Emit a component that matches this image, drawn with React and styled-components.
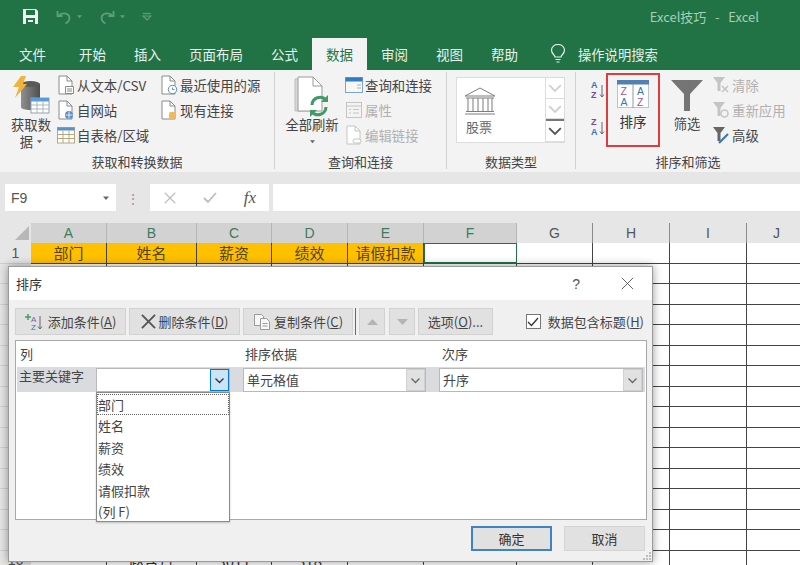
import React from 'react'
import styled, { createGlobalStyle } from 'styled-components'

const GlobalStyle = createGlobalStyle`
    html, body {
        margin: 0;
        padding: 0;
        background: #e6e6e6;
    }
    * {
        box-sizing: border-box;
    }
`

const FONT = `"Noto Sans CJK SC", "Liberation Sans", sans-serif`

const TABS = ['开始', '插入', '页面布局', '公式', '数据', '审阅', '视图', '帮助']
const COLS = [
    { name: 'A', width: 76, text: '部门', extra: '' },
    { name: 'B', width: 90, text: '姓名', extra: '赵含丹' },
    { name: 'C', width: 75, text: '薪资', extra: '3011' },
    { name: 'D', width: 76, text: '绩效', extra: '318' },
    { name: 'E', width: 76, text: '请假扣款', extra: '' },
    { name: 'F', width: 93, text: '', extra: '' },
    { name: 'G', width: 76, text: '', extra: '' },
    { name: 'H', width: 77, text: '', extra: '' },
    { name: 'I', width: 77, text: '', extra: '' },
    { name: 'J', width: 60, text: '', extra: '' },
]
const SORT_FIELDS = ['部门', '姓名', '薪资', '绩效', '请假扣款', '(列 F)']
const ROW_NUMBERS = Array.from({ length: 16 }, (_, i) => i + 1)

function SaveIcon() {
    return (
        <svg width="17" height="17" viewBox="0 0 17 17">
            <path d="M1 1h13l2 2v13H1z" fill="#f2f2f2" />
            <rect x="4" y="2" width="9" height="5" fill="#217346" />
            <rect x="4" y="10" width="9" height="6" fill="#217346" />
            <rect x="6" y="12" width="5" height="2" fill="#f2f2f2" />
        </svg>
    )
}

function UndoIcon({ flip }) {
    return (
        <svg width="16" height="16" viewBox="0 0 16 16" fill="none" stroke="#5f9d7d" strokeWidth="1.8" style={{ transform: flip ? 'scaleX(-1)' : 'none' }}>
            <path d="M1.5 2v5h5" />
            <path d="M2 7c3-3.5 9-3.5 11 0 1.2 2.5 0 6-3.5 7.5" />
        </svg>
    )
}

function TinyCaret({ color = '#5f9d7d', size = 6 }) {
    return (
        <svg width={size} height={size} viewBox="0 0 6 6">
            <path d="M0 1.5h6L3 5z" fill={color} />
        </svg>
    )
}

function CustomizeIcon() {
    return (
        <svg width="10" height="10" viewBox="0 0 10 10" fill="none" stroke="#5f9d7d" strokeWidth="1.2">
            <path d="M1 1.5h8" />
            <path d="M1 4l4 4 4-4z" />
        </svg>
    )
}

function BulbIcon() {
    return (
        <svg width="16" height="20" viewBox="0 0 16 20" fill="none" stroke="#e8f1ec" strokeWidth="1.2">
            <path d="M5 13c0-2-3.5-3-3.5-7a6.5 5.5 0 0 1 13 0c0 4-3.5 5-3.5 7z" />
            <path d="M5.5 15.5h5M6.5 18h3" />
        </svg>
    )
}

function DatabaseIcon() {
    return (
        <svg width="38" height="38" viewBox="0 0 38 38">
            <defs>
                <linearGradient id="cyl" x1="0" x2="1" y1="0" y2="0">
                    <stop offset="0" stopColor="#909090" />
                    <stop offset="1" stopColor="#4e4e4e" />
                </linearGradient>
            </defs>
            <path d="M9 8h19v23c0 2-4 3-9.500 3S9 33 9 31z" fill="url(#cyl)" />
            <ellipse cx="18.500" cy="8" rx="9.500" ry="3" fill="#5a5a5a" />
            <path d="M9 0h5l-3 8h4L3 22l4-11H1z" fill="#f0b43c" />
            <rect x="19" y="22" width="18" height="15" fill="#fff" stroke="#8fa3b5" />
            <rect x="19" y="22" width="18" height="3.500" fill="#5b9bd5" />
            <path d="M25 25v12M31 25v12M19 29h18M19 33h18" stroke="#a8b6c2" strokeWidth="1" />
        </svg>
    )
}

function DocIcon({ badge, color = '#8a8a8a' }) {
    return (
        <svg width="18" height="20" viewBox="0 0 18 20" fill="none">
            <path d="M2 1h8l5 5v13H2z" fill="#fff" stroke={color} />
            <path d="M10 1v5h5" stroke={color} />
            {badge === 'text' && <path d="M8.500 11.500h8v7h-8zM10 14h5M10 16h5" stroke={color} fill="#fff" />}
            {badge === 'clock' && <><circle cx="12.500" cy="14.500" r="4.200" fill="#fff" stroke="#5b8fc7" /><path d="M12.500 12.500v2h2" stroke="#5b8fc7" /></>}
            {badge === 'web' && <><circle cx="12" cy="15" r="4" fill="#5b8fc7" /><path d="M8.500 15h7M12 11.500v7" stroke="#fff" strokeWidth=".8" /></>}
            {badge === 'link' && <rect x="9" y="12" width="7" height="7" rx="1.500" fill="#f0b860" />}
            {badge === 'chain' && <rect x="8" y="14" width="8" height="4" rx="2" fill="#fff" stroke={color} />}
        </svg>
    )
}

function TableIcon({ size = 18, header = '#5b8fc7', line = '#b9a680' }) {
    return (
        <svg width={size} height={size} viewBox="0 0 18 18" fill="none">
            <rect x=".5" y="1.500" width="17" height="15.500" fill="#fff" stroke={line} />
            <rect x=".5" y="1.500" width="17" height="3" fill={header} />
            <path d="M6 4.500V17M12 4.500V17M.5 8.500h17M.5 12.500h17" stroke={line} />
        </svg>
    )
}

function WindowIcon() {
    return (
        <svg width="18" height="16" viewBox="0 0 18 16" fill="none">
            <rect x=".5" y=".5" width="17" height="15" fill="#f7f7f7" stroke="#7ea4c9" />
            <rect x=".5" y=".5" width="17" height="4" fill="#2f7cc4" />
            <path d="M12 8h4M12 11h4" stroke="#b0b0b0" />
        </svg>
    )
}

function PropsIcon() {
    return (
        <svg width="16" height="16" viewBox="0 0 16 16" fill="none" stroke="#c4c4c4">
            <rect x=".5" y=".5" width="15" height="15" />
            <path d="M.5 4h15M3 7.500h2M7 7.500h6M3 11h2M7 11h6" />
        </svg>
    )
}

function RefreshAllIcon() {
    return (
        <svg width="36" height="42" viewBox="0 0 36 42" fill="none">
            <path d="M1 3h20v32H1z" fill="#d8d8d8" stroke="#bdbdbd" />
            <path d="M4 1h15l9 9v25H4z" fill="#fff" stroke="#9a9a9a" />
            <path d="M19 1v9h9" stroke="#9a9a9a" />
            <path d="M18 29a8 8 0 0 1 14-5" stroke="#3f9a66" strokeWidth="3" />
            <path d="M34 19v7h-7z" fill="#3f9a66" />
            <path d="M32 31a8 8 0 0 1-14 5" stroke="#3f9a66" strokeWidth="3" />
            <path d="M16 41v-7h7z" fill="#3f9a66" />
        </svg>
    )
}

function BankIcon() {
    return (
        <svg width="32" height="28" viewBox="0 0 32 28" fill="none" stroke="#7d7d7d" strokeWidth="1">
            <path d="M16 1L1 9h30z" />
            <path d="M2 11h28M4 11v13M9 11v13M14 11v13M19 11v13M24 11v13M28 11v13M2 24.500h28M1 27h30" />
        </svg>
    )
}

function AzIcon({ top, bottom, topColor, bottomColor }) {
    return (
        <svg width="16" height="20" viewBox="0 0 16 20">
            <text x="1" y="8.500" fontFamily="Liberation Sans" fontWeight="700" fontSize="9" fill={topColor}>{top}</text>
            <text x="1" y="18.500" fontFamily="Liberation Sans" fontWeight="700" fontSize="9" fill={bottomColor}>{bottom}</text>
            <path d="M12 6v12M10 15.500l2 2.500 2-2.500" fill="none" stroke="#666" />
        </svg>
    )
}

function SortIcon() {
    return (
        <svg width="32" height="28" viewBox="0 0 32 28">
            <rect x=".5" y=".5" width="31" height="27" fill="#fff" stroke="#b8c4ce" />
            <rect x="0" y="0" width="32" height="4.500" fill="#4f81b5" />
            <path d="M16 4v24" stroke="#8a98a5" />
            <text x="3.500" y="15" fontFamily="Liberation Sans" fontSize="10.500" fill="#a0559a">Z</text>
            <text x="3.500" y="26" fontFamily="Liberation Sans" fontSize="10.500" fill="#3a73b0">A</text>
            <text x="20" y="15" fontFamily="Liberation Sans" fontSize="10.500" fill="#3a73b0">A</text>
            <text x="20" y="26" fontFamily="Liberation Sans" fontSize="10.500" fill="#a0559a">Z</text>
        </svg>
    )
}

function FunnelIcon() {
    return (
        <svg width="32" height="32" viewBox="0 0 32 32">
            <path d="M0 1h32L19 15v17h-6V15z" fill="#757575" />
        </svg>
    )
}

function SmallFunnel({ mark, color = '#c4c4c4' }) {
    return (
        <svg width="18" height="18" viewBox="0 0 18 18" fill="none">
            <path d="M1 1h12L8.500 7v8h-3V7z" fill={color} />
            {mark === 'x' && <path d="M10 10l6 6M16 10l-6 6" stroke={color} strokeWidth="1.500" />}
            {mark === 'refresh' && <circle cx="12.500" cy="12.500" r="3.500" stroke={color} strokeWidth="1.500" />}
            {mark === 'pen' && <path d="M7 17L16 8" stroke="#3a78b5" strokeWidth="2.200" />}
        </svg>
    )
}

function AddConditionIcon() {
    return (
        <svg width="20" height="18" viewBox="0 0 20 18" fill="none">
            <path d="M3 1v6M0 4h6" stroke="#4a9a6c" strokeWidth="1.500" />
            <text x="6" y="9" fontFamily="Liberation Sans" fontSize="8" fill="#7a5a9a">A</text>
            <text x="6" y="17" fontFamily="Liberation Sans" fontSize="8" fill="#3a73b0">Z</text>
            <path d="M15 3v13M13 13.500l2 2.500 2-2.500" stroke="#666" />
        </svg>
    )
}

function CrossIcon({ size = 16, color = '#555', weight = 2 }) {
    return (
        <svg width={size} height={size} viewBox="0 0 16 16" fill="none" stroke={color} strokeWidth={weight}>
            <path d="M1 1l14 14M15 1L1 15" />
        </svg>
    )
}

function CopyIcon() {
    return (
        <svg width="18" height="18" viewBox="0 0 18 18" fill="#f7f7f7" stroke="#9a9a9a">
            <path d="M1.500 1.500h7l2 2v9h-9z" />
            <path d="M7.500 5.500h6l3 3v8h-9z" />
            <path d="M9.500 10.500h5M9.500 13h5" />
        </svg>
    )
}

function Chevron({ color = '#555', size = 11 }) {
    return (
        <svg width={size} height={size} viewBox="0 0 11 11" fill="none" stroke={color} strokeWidth="1.300">
            <path d="M1.500 3.500l4 4 4-4" />
        </svg>
    )
}

function SmallCommand({ icon, children, muted, bold }) {
    return (
        <CommandRow $muted={muted} $bold={bold}>
            <CommandIcon>{icon}</CommandIcon>
            {children}
        </CommandRow>
    )
}

function Combo({ text, active }) {
    return (
        <ComboBox>
            <ComboText>{text}</ComboText>
            <ComboArrow $active={active}><Chevron color={active ? '#333' : '#666'} /></ComboArrow>
        </ComboBox>
    )
}

function App() {
    return (
        <Page>
            <GlobalStyle />

            <TitleBar>
                <QuickAccess>
                    <SaveIcon />
                    <UndoGroup>
                        <UndoIcon />
                        <TinyCaret size={5} />
                    </UndoGroup>
                    <UndoGroup>
                        <UndoIcon flip />
                        <TinyCaret size={5} />
                    </UndoGroup>
                    <CustomizeIcon />
                </QuickAccess>
                <DocTitle>Excel技巧 &nbsp;&nbsp;-&nbsp;&nbsp; Excel</DocTitle>
            </TitleBar>

            <TabBar>
                <FileTab>文件</FileTab>
                {TABS.map(tab => (
                    <Tab key={tab} $active={tab === '数据'}>{tab}</Tab>
                ))}
                <SearchHint>
                    <BulbIcon />
                    操作说明搜索
                </SearchHint>
            </TabBar>

            <Ribbon>
                <Group $width={275}>
                    <GroupBody>
                        <BigCommand $width={44} $left={9}>
                            <BigIcon><DatabaseIcon /></BigIcon>
                            获取数
                            <span>据 <TinyCaret color="#666" size={5} /></span>
                        </BigCommand>
                        <CommandColumn $left={4} $width={103}>
                            <SmallCommand icon={<DocIcon badge="text" />}>从文本/CSV</SmallCommand>
                            <SmallCommand icon={<DocIcon badge="web" />}>自网站</SmallCommand>
                            <SmallCommand icon={<TableIcon />}>自表格/区域</SmallCommand>
                        </CommandColumn>
                        <CommandColumn>
                            <SmallCommand icon={<DocIcon badge="clock" />}>最近使用的源</SmallCommand>
                            <SmallCommand icon={<DocIcon badge="link" />}>现有连接</SmallCommand>
                        </CommandColumn>
                    </GroupBody>
                    <GroupLabel>获取和转换数据</GroupLabel>
                </Group>

                <Group $width={172}>
                    <GroupBody>
                        <BigCommand $width={54} $left={10}>
                            <BigIcon><RefreshAllIcon /></BigIcon>
                            全部刷新
                            <span><TinyCaret color="#666" size={5} /></span>
                        </BigCommand>
                        <CommandColumn $left={6}>
                            <SmallCommand icon={<WindowIcon />}>查询和连接</SmallCommand>
                            <SmallCommand icon={<PropsIcon />} muted>属性</SmallCommand>
                            <SmallCommand icon={<DocIcon badge="chain" color="#c4c4c4" />} muted>编辑链接</SmallCommand>
                        </CommandColumn>
                    </GroupBody>
                    <GroupLabel>查询和连接</GroupLabel>
                </Group>

                <Group $width={129}>
                    <GroupBody>
                        <Gallery>
                            <GalleryItem>
                                <BankIcon />
                                <GalleryCaption>股票</GalleryCaption>
                            </GalleryItem>
                            <GalleryScroll>
                                <GalleryButton><Chevron color="#d0d0d0" size={16} /></GalleryButton>
                                <GalleryButton><Chevron color="#d0d0d0" size={16} /></GalleryButton>
                                <GalleryButton $more><Chevron color="#555" size={16} /></GalleryButton>
                            </GalleryScroll>
                        </Gallery>
                    </GroupBody>
                    <GroupLabel>数据类型</GroupLabel>
                </Group>

                <Group $width={224} $last>
                    <GroupBody>
                        <SortArrows>
                            <AzIcon top="A" bottom="Z" topColor="#3a73b0" bottomColor="#7a4a9a" />
                            <AzIcon top="Z" bottom="A" topColor="#7a4a9a" bottomColor="#3a73b0" />
                        </SortArrows>
                        <SortButton>
                            <SortIcon />
                            排序
                        </SortButton>
                        <FilterButton>
                            <FunnelIcon />
                            筛选
                        </FilterButton>
                        <CommandColumn $left={9}>
                            <SmallCommand icon={<SmallFunnel mark="x" />} muted>清除</SmallCommand>
                            <SmallCommand icon={<SmallFunnel mark="refresh" />} muted>重新应用</SmallCommand>
                            <SmallCommand icon={<SmallFunnel mark="pen" color="#666" />}>高级</SmallCommand>
                        </CommandColumn>
                    </GroupBody>
                    <GroupLabel>排序和筛选</GroupLabel>
                </Group>
            </Ribbon>

            <FormulaBar>
                <NameBox>
                    F9
                    <TinyCaret color="#666" />
                </NameBox>
                <Dots>⋮</Dots>
                <FormulaButtons>
                    <CrossIcon size={12} color="#bdbdbd" weight={1.6} />
                    <svg width="14" height="12" viewBox="0 0 14 12" fill="none" stroke="#bdbdbd" strokeWidth="1.800">
                        <path d="M1 6l4 4 8-9" />
                    </svg>
                    <FxLabel>fx</FxLabel>
                </FormulaButtons>
                <FormulaInput />
            </FormulaBar>

            <Sheet>
                <HeaderRow>
                    <Corner>
                        <svg width="14" height="14" viewBox="0 0 14 14"><path d="M14 0v14H0z" fill="#b8b8b8" /></svg>
                    </Corner>
                    {COLS.map(col => (
                        <ColHeader key={col.name} $width={col.width} $selected={col.name < 'G'}>{col.name}</ColHeader>
                    ))}
                </HeaderRow>
                {ROW_NUMBERS.map(row => (
                    <SheetRow key={row}>
                        <RowHeader>{row === 1 || row === 16 ? row : ''}</RowHeader>
                        {COLS.map(col => (
                            <Cell
                                key={col.name}
                                $width={col.width}
                                $filled={row === 1 && col.name < 'F'}
                                $active={row === 1 && col.name === 'F'}
                            >
                                {row === 1 ? col.text : row === 16 ? col.extra : ''}
                            </Cell>
                        ))}
                    </SheetRow>
                ))}
            </Sheet>

            <Dialog>
                <DialogTitle>
                    排序
                    <DialogActions>
                        <HelpMark>?</HelpMark>
                        <CrossIcon size={13} color="#444" weight={1} />
                    </DialogActions>
                </DialogTitle>

                <Toolbar>
                    <ToolButton $width={111}><AddConditionIcon /><span>添加条件(<u>A</u>)</span></ToolButton>
                    <ToolButton $width={111}><CrossIcon size={15} color="#555" /><span>删除条件(<u>D</u>)</span></ToolButton>
                    <ToolButton $width={110}><CopyIcon /><span>复制条件(<u>C</u>)</span></ToolButton>
                    <ToolDivider />
                    <ToolButton $width={26}>
                        <svg width="11" height="6" viewBox="0 0 11 6"><path d="M5.500 0L11 6H0z" fill="#b5b5b5" /></svg>
                    </ToolButton>
                    <ToolButton $width={26} $left={1}>
                        <svg width="11" height="6" viewBox="0 0 11 6"><path d="M0 0h11L5.500 6z" fill="#b5b5b5" /></svg>
                    </ToolButton>
                    <ToolButton $width={75}><span>选项(<u>O</u>)...</span></ToolButton>
                    <HeaderCheck>
                        <CheckBox>
                            <svg width="12" height="10" viewBox="0 0 12 10" fill="none" stroke="#333" strokeWidth="1.300">
                                <path d="M1 5l3.500 3.500L11 1" />
                            </svg>
                        </CheckBox>
                        <span>数据包含标题(<u>H</u>)</span>
                    </HeaderCheck>
                </Toolbar>

                <ConditionList>
                    <ListHeader>
                        <span>列</span>
                        <span>排序依据</span>
                        <span>次序</span>
                    </ListHeader>
                    <ConditionRow>
                        <KeyLabel>主要关键字</KeyLabel>
                        <Combo text="" active />
                        <Combo text="单元格值" />
                        <Combo text="升序" />
                    </ConditionRow>
                    <FieldMenu>
                        {SORT_FIELDS.map((field, i) => (
                            <FieldOption key={field} $focused={i === 0}>{field}</FieldOption>
                        ))}
                    </FieldMenu>
                </ConditionList>

                <DialogFooter>
                    <FooterButton $primary>确定</FooterButton>
                    <FooterButton>取消</FooterButton>
                </DialogFooter>
                <ResizeGrip>
                    <svg width="9" height="9" viewBox="0 0 9 9" fill="#bdbdbd">
                        <path d="M7 0h2v2H7zM4 3h2v2H4zM7 3h2v2H7zM1 6h2v2H1zM4 6h2v2H4zM7 6h2v2H7z" />
                    </svg>
                </ResizeGrip>
            </Dialog>
        </Page>
    )
}

export default App

const Page = styled.div`
    position: relative;
    width: 800px;
    height: 565px;
    overflow: hidden;
    background: #e6e6e6;
    font-family: ${FONT};
    font-size: 13px;
    color: #444;
`

const TitleBar = styled.div`
    height: 38px;
    background: #217346;
    display: flex;
    align-items: flex-start;
    justify-content: space-between;
    padding: 8px 41px 0 22px;
`

const QuickAccess = styled.div`
    display: flex;
    align-items: center;
    gap: 17px;
`

const UndoGroup = styled.div`
    display: flex;
    align-items: center;
    gap: 5px;
`

const DocTitle = styled.div`
    color: #a3d0b6;
    font-size: 13px;
    line-height: 17px;
    white-space: nowrap;
`

const TabBar = styled.div`
    height: 32px;
    background: #217346;
    display: flex;
    align-items: stretch;
    padding-left: 5px;
    color: #e8f1ec;
    font-size: 13.5px;
`

const FileTab = styled.div`
    padding: 0 14px;
    margin-right: 5px;
    display: flex;
    align-items: center;
`

const Tab = styled.div`
    padding: 0 14px;
    display: flex;
    align-items: center;
    background: ${props => props.$active ? '#f3f3f3' : 'transparent'};
    color: ${props => props.$active ? '#217346' : '#e8f1ec'};
`

const SearchHint = styled.div`
    display: flex;
    align-items: center;
    gap: 12px;
    margin-left: 18px;
    font-size: 13.3px;
`

const Ribbon = styled.div`
    height: 102px;
    background: #f3f3f3;
    display: flex;
`

const Group = styled.div`
    width: ${props => props.$width}px;
    display: flex;
    flex-direction: column;
    position: relative;
    border-right: ${props => props.$last ? 'none' : '1px solid #d0d0d0'};
    margin: 2px 0 3px;
`

const GroupBody = styled.div`
    height: 82px;
    display: flex;
    padding-top: 2px;
`

const GroupLabel = styled.div`
    text-align: center;
    font-size: 13px;
    line-height: 15px;
    margin-top: 3px;
    color: #444;
`

const BigCommand = styled.div`
    width: ${props => props.$width}px;
    margin-left: ${props => props.$left}px;
    display: flex;
    flex-direction: column;
    align-items: center;
    font-size: 13.3px;
    line-height: 17px;
    white-space: nowrap;
    span {
        display: flex;
        align-items: center;
        gap: 4px;
        height: 17px;
    }
`

const BigIcon = styled.div`
    height: 42px;
    display: flex;
    align-items: flex-start;
    padding-top: 2px;
    margin-bottom: 0;
`

const CommandColumn = styled.div`
    width: ${props => props.$width ? `${props.$width}px` : 'auto'};
    margin-left: ${props => props.$left || 0}px;
    margin-top: -2px;
    display: flex;
    flex-direction: column;
`

const CommandRow = styled.div`
    height: 25px;
    display: flex;
    align-items: center;
    gap: 2px;
    white-space: nowrap;
    font-size: 13.4px;
    color: ${props => props.$muted ? '#b0b0b0' : '#444'};
`

const CommandIcon = styled.div`
    width: 18px;
    display: flex;
    justify-content: center;
`

const Gallery = styled.div`
    width: 109px;
    height: 66px;
    margin: 3px 0 0 9px;
    background: #fff;
    border: 1px solid #dcdcdc;
    display: flex;
`

const GalleryItem = styled.div`
    flex: 1;
    display: flex;
    flex-direction: column;
    align-items: flex-start;
    gap: 3px;
    padding: 9px 0 0 7px;
    color: #666;
    font-size: 13px;
    line-height: 17px;
`

const GalleryCaption = styled.span`
    margin-left: 2px;
`

const GalleryScroll = styled.div`
    width: 19px;
    display: flex;
    flex-direction: column;
    border-left: 1px solid #dcdcdc;
`

const GalleryButton = styled.div`
    flex: 1;
    display: flex;
    align-items: center;
    justify-content: center;
    border-bottom: 1px solid #dcdcdc;
    border-top: ${props => props.$more ? '2px solid #777' : 'none'};
`

const SortArrows = styled.div`
    width: 30px;
    display: flex;
    flex-direction: column;
    align-items: center;
    gap: 17px;
    padding: 5px 0 0 13px;
`

const SortButton = styled.div`
    width: 54px;
    height: 74px;
    margin-top: -1px;
    border: 2px solid #dc3d3f;
    display: flex;
    flex-direction: column;
    align-items: center;
    gap: 4px;
    padding-top: 5px;
    font-size: 13.5px;
    line-height: 19px;
    color: #333;
`

const FilterButton = styled.div`
    width: 32px;
    margin-left: 11px;
    display: flex;
    flex-direction: column;
    align-items: center;
    gap: 3px;
    padding-top: 5px;
    font-size: 13.3px;
    line-height: 19px;
    white-space: nowrap;
`

const FormulaBar = styled.div`
    height: 51px;
    display: flex;
    align-items: flex-start;
    padding: 12px 0 0 5px;
`

const NameBox = styled.div`
    width: 111px;
    height: 27px;
    background: #fff;
    display: flex;
    align-items: center;
    justify-content: space-between;
    padding: 0 7px 0 6px;
    font-family: "Liberation Sans", sans-serif;
    font-size: 14px;
    color: #555;
`

const Dots = styled.div`
    width: 34px;
    height: 27px;
    display: flex;
    align-items: center;
    justify-content: center;
    color: #999;
    font-size: 14px;
`

const FormulaButtons = styled.div`
    width: 119px;
    height: 27px;
    background: #fff;
    display: flex;
    align-items: center;
    justify-content: space-between;
    padding: 0 13px 0 14px;
`

const FxLabel = styled.span`
    font-family: "Liberation Serif", serif;
    font-style: italic;
    font-size: 17px;
    color: #555;
`

const FormulaInput = styled.div`
    flex: 1;
    height: 27px;
    margin-left: 4px;
    background: #fff;
`

const Sheet = styled.div`
    background: #fff;
`

const HeaderRow = styled.div`
    display: flex;
    height: 20px;
    background: #e6e6e6;
`

const Corner = styled.div`
    width: 31px;
    flex: none;
    display: flex;
    align-items: flex-end;
    justify-content: flex-end;
    padding: 0 2px 3px 0;
`

const ColHeader = styled.div`
    width: ${props => props.$width}px;
    flex: none;
    display: flex;
    align-items: center;
    justify-content: center;
    border-right: 1px solid ${props => props.$selected ? '#b5b5b5' : '#8a8a8a'};
    background: ${props => props.$selected ? '#d2d2d2' : '#e6e6e6'};
    color: ${props => props.$selected ? '#3f7a5c' : '#555'};
    font-family: "Liberation Sans", sans-serif;
    font-size: 14px;
`

const SheetRow = styled.div`
    display: flex;
    height: 20.5px;
`

const RowHeader = styled.div`
    width: 31px;
    flex: none;
    display: flex;
    align-items: center;
    justify-content: center;
    background: #e6e6e6;
    border-bottom: 1px solid #cfcfcf;
    font-family: "Liberation Sans", sans-serif;
    font-size: 14px;
    color: #555;
`

const Cell = styled.div`
    width: ${props => props.$width}px;
    flex: none;
    display: flex;
    align-items: center;
    justify-content: center;
    font-size: 15px;
    white-space: nowrap;
    color: ${props => props.$filled ? '#54430f' : '#333'};
    background: ${props => props.$filled ? '#ffc000' : '#fff'};
    border-right: 1px solid #444;
    border-bottom: 1px solid #444;
    ${props => props.$active && `
        border: 1px solid #217346;
        border-bottom-width: 2px;
    `}
`

const Dialog = styled.div`
    position: absolute;
    left: 8px;
    top: 266px;
    width: 645px;
    height: 296px;
    background: #f0f0f0;
    border: 1px solid #9a9a9a;
    box-shadow: 0 0 9px rgba(0, 0, 0, 0.4);
    display: flex;
    flex-direction: column;
`

const DialogTitle = styled.div`
    height: 33px;
    background: #fff;
    display: flex;
    align-items: center;
    justify-content: space-between;
    padding: 0 18px 0 7px;
    color: #333;
`

const DialogActions = styled.div`
    display: flex;
    align-items: center;
    gap: 41px;
`

const HelpMark = styled.span`
    font-family: "Liberation Sans", sans-serif;
    font-size: 14px;
    color: #555;
`

const Toolbar = styled.div`
    height: 27px;
    margin-top: 8px;
    padding: 0 8px 0 6px;
    display: flex;
    align-items: stretch;
    gap: 3px;
`

const ToolButton = styled.div`
    width: ${props => props.$width}px;
    margin-left: ${props => props.$left || 0}px;
    flex: none;
    background: #e1e1e1;
    border: 1px solid #d2d2d2;
    display: flex;
    align-items: center;
    justify-content: center;
    gap: 3px;
    font-size: 13px;
    white-space: nowrap;
`

const ToolDivider = styled.div`
    width: 1px;
    background: #666;
    margin: 0 0 0 -1px;
`

const HeaderCheck = styled.div`
    margin-left: auto;
    display: flex;
    align-items: center;
    gap: 7px;
    white-space: nowrap;
    font-size: 13px;
`

const CheckBox = styled.div`
    width: 15px;
    height: 15px;
    background: #fff;
    border: 1px solid #777;
    display: flex;
    align-items: center;
    justify-content: center;
`

const ConditionList = styled.div`
    position: relative;
    width: 632px;
    height: 180px;
    margin: 5px 0 0 6px;
    background: #fff;
    border: 1px solid #a8a8a8;
`

const ListHeader = styled.div`
    height: 26px;
    display: grid;
    grid-template-columns: 225px 197px 1fr;
    align-items: center;
    padding-left: 4px;
    line-height: 24px;
`

const ConditionRow = styled.div`
    height: 25px;
    margin: 0 1px;
    background: #d9dbdf;
    display: grid;
    grid-template-columns: 66px 134px 183px 204px;
    column-gap: 13px;
    padding-top: 1px;
`

const KeyLabel = styled.div`
    padding-left: 2px;
    line-height: 15px;
    white-space: nowrap;
`

const ComboBox = styled.div`
    background: #fff;
    border: 1px solid #b8b8b8;
    display: flex;
    align-items: stretch;
`

const ComboText = styled.div`
    flex: 1;
    padding-left: 3px;
    line-height: 22px;
`

const ComboArrow = styled.div`
    width: 19px;
    display: flex;
    align-items: center;
    justify-content: center;
    background: ${props => props.$active ? '#cce4f7' : '#e1e1e1'};
    border: 1px solid ${props => props.$active ? '#0078d7' : '#d0d0d0'};
`

const FieldMenu = styled.div`
    position: absolute;
    left: 80px;
    top: 51px;
    width: 134px;
    height: 130px;
    padding-top: 1px;
    background: #fff;
    border: 1px solid #8a8a8a;
    box-shadow: 0 1px 2px rgba(0, 0, 0, 0.2);
`

const FieldOption = styled.div`
    height: 21.4px;
    line-height: 20px;
    border: 1px dotted ${props => props.$focused ? '#666' : 'transparent'};
`

const DialogFooter = styled.div`
    display: flex;
    justify-content: flex-end;
    gap: 12px;
    margin-top: 6px;
    padding-right: 7px;
`

const FooterButton = styled.div`
    width: 81px;
    height: 25px;
    display: flex;
    align-items: center;
    justify-content: center;
    background: #e1e1e1;
    border: ${props => props.$primary ? '2px solid #3f83c4' : '1px solid #d4d4d4'};
    color: #333;
`

const ResizeGrip = styled.div`
    position: absolute;
    right: 1px;
    bottom: 0;
    line-height: 0;
`
